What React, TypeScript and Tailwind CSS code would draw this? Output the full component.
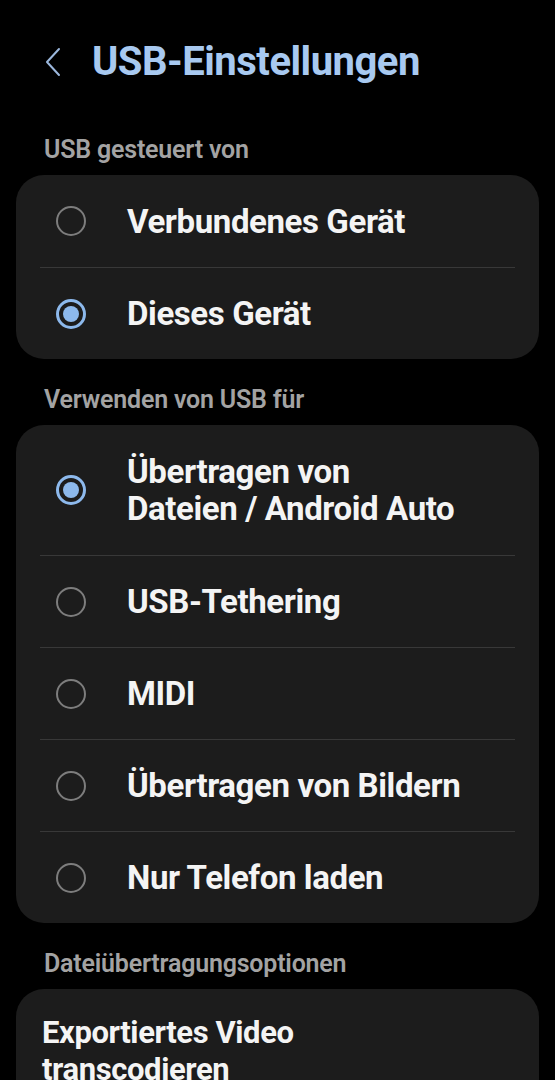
import React from "react";

type Option = { label: string[]; checked?: boolean };

const controlled: Option[] = [
  { label: ["Verbundenes Gerät"] },
  { label: ["Dieses Gerät"], checked: true },
];

const usage: Option[] = [
  { label: ["Übertragen von", "Dateien / Android Auto"], checked: true },
  { label: ["USB-Tethering"] },
  { label: ["MIDI"] },
  { label: ["Übertragen von Bildern"] },
  { label: ["Nur Telefon laden"] },
];

function Radio({ checked }: { checked?: boolean }) {
  if (checked) {
    return (
      <span className="flex h-[30px] w-[30px] shrink-0 items-center justify-center rounded-full border-[3px] border-[#8db9ec]">
        <span className="h-[16px] w-[16px] rounded-full bg-[#8db9ec]" />
      </span>
    );
  }
  return <span className="h-[30px] w-[30px] shrink-0 rounded-full border-2 border-[#7d7d7d]" />;
}

function SectionTitle({ children }: { children: React.ReactNode }) {
  return (
    <h2 className="px-[44px] text-[25px] font-semibold leading-[25px] tracking-[-0.2px] text-[#a3a3a3]">
      {children}
    </h2>
  );
}

function RadioCard({ options }: { options: Option[] }) {
  return (
    <div className="mx-[16px] rounded-[28px] bg-[#1c1c1c] px-[24px]">
      {options.map((o, i) => (
        <div
          key={i}
          className={
            "flex items-center gap-[41px] px-[16px] " +
            (o.label.length > 1 ? "h-[130px] " : "h-[92px] ") +
            (i > 0 ? "border-t border-[#383838]" : "")
          }
        >
          <Radio checked={o.checked} />
          <div className="text-[33px] font-bold leading-[37px] tracking-[-0.4px] text-[#f4f4f4]">
            {o.label.map((l) => (
              <div key={l}>{l}</div>
            ))}
          </div>
        </div>
      ))}
    </div>
  );
}

export default function App() {
  return (
    <div className="h-[1080px] w-[555px] overflow-hidden bg-black font-['Roboto',sans-serif]">
      <header className="flex h-[124px] items-center gap-[30px] px-[44px]">
        <svg width="18" height="30" viewBox="0 0 18 30" fill="none" className="shrink-0">
          <path d="M15 2 L3 15 L15 28" stroke="#9cb8dd" strokeWidth="2" strokeLinecap="round" strokeLinejoin="round" />
        </svg>
        <h1 className="text-[40px] font-bold tracking-[-0.5px] text-[#a8c9f0]">USB-Einstellungen</h1>
      </header>

      <div className="pt-[13px]">
        <SectionTitle>USB gesteuert von</SectionTitle>
      </div>
      <div className="pt-[13px]">
        <RadioCard options={controlled} />
      </div>

      <div className="pt-[28px]">
        <SectionTitle>Verwenden von USB für</SectionTitle>
      </div>
      <div className="pt-[13px]">
        <RadioCard options={usage} />
      </div>

      <div className="pt-[28px]">
        <SectionTitle>Dateiübertragungsoptionen</SectionTitle>
      </div>
      <div className="pt-[13px]">
        <div className="mx-[16px] rounded-[28px] bg-[#1c1c1c] px-[26px] pt-[25px] pb-[24px]">
          <div className="text-[31px] font-bold leading-[37px] tracking-[-0.4px] text-[#f4f4f4]">
            <div>Exportiertes Video</div>
            <div>transcodieren</div>
          </div>
        </div>
      </div>
    </div>
  );
}
